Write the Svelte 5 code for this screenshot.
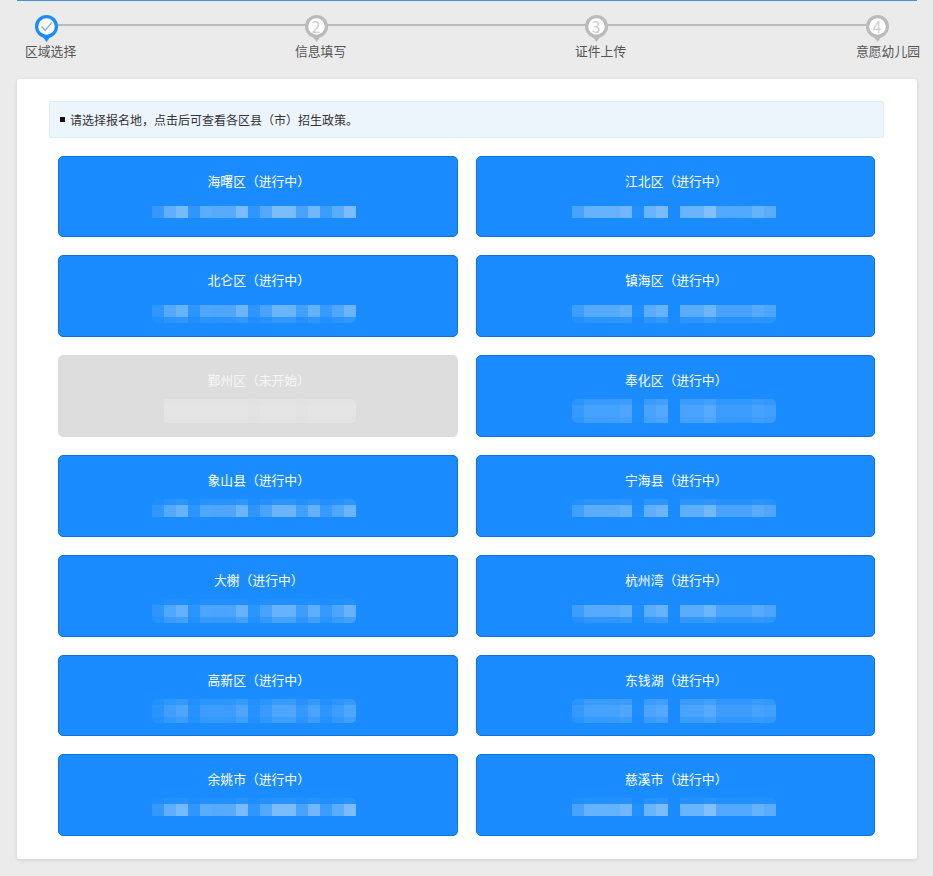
<script>
  const steps = [
    { label: "区域选择", active: true },
    { label: "信息填写", num: 2 },
    { label: "证件上传", num: 3 },
    { label: "意愿幼儿园", num: 4 }
  ];

  // blurred-out line under each title: one row of 17 cells, same shape per column
  const leftCells = [0.12, 0.3, 0.4, 0.1, 0.28, 0.27, 0.27, 0.42, 0.1, 0.25, 0.42, 0.42, 0.2, 0.38, 0.15, 0.28, 0.42];
  const rightCells = [0.2, 0.33, 0.33, 0.33, 0.38, 0.03, 0.35, 0.42, 0, 0.35, 0.35, 0.45, 0.25, 0.25, 0.25, 0.33, 0.28];
  const flatCells = [0, 0.25, 0.25, 0.25, 0.25, 0.25, 0.25, 0.25, 0.2, 0.25, 0.25, 0.25, 0.2, 0.25, 0.25, 0.25, 0.25];

  // blur: [row above, main row, row below] strength
  const areas = [
    { name: "海曙区", blur: [0, 1, 0] },
    { name: "江北区", blur: [0, 1, 0] },
    { name: "北仑区", blur: [0, 0.85, 0.25] },
    { name: "镇海区", blur: [0, 0.8, 0.25] },
    { name: "鄞州区", status: "未开始", blur: [0.8, 1, 0.8] },
    { name: "奉化区", blur: [0.4, 0.6, 0.5] },
    { name: "象山县", blur: [0.2, 0.85, 0] },
    { name: "宁海县", blur: [0.2, 0.85, 0] },
    { name: "大榭", blur: [0.1, 0.8, 0.45] },
    { name: "杭州湾", blur: [0, 0.8, 0.3] },
    { name: "高新区", blur: [0.3, 0.55, 0.4] },
    { name: "东钱湖", blur: [0.4, 0.6, 0.4] },
    { name: "余姚市", blur: [0.15, 1, 0] },
    { name: "慈溪市", blur: [0.15, 1, 0] }
  ];

  function cellsFor(i, area) {
    if (area.status) return flatCells;
    return i % 2 === 0 ? leftCells : rightCells;
  }
</script>

<div class="page">
  <div class="steps">
    {#each steps as step}
      <div class="step" class:active={step.active}>
        <div class="pin">
          <svg width="23" height="27" viewBox="0 0 23 27">
            <path class="tail" d="M6.5 20 L11.5 27 L16.5 20 Z" />
            <circle class="ring" cx="11.5" cy="11.5" r="9.9" />
            {#if step.active}
              <path class="tick" d="M6.5 11.5 L10.2 15.4 L16.6 7.6" />
            {/if}
          </svg>
          {#if step.num}
            <span class="num">{step.num}</span>
          {/if}
        </div>
        <div class="label">{step.label}</div>
      </div>
    {/each}
  </div>

  <div class="card">
    <div class="notice">请选择报名地，点击后可查看各区县（市）招生政策。</div>
    <div class="areas">
      {#each areas as area, i}
        <button class="area" class:off={area.status}>
          <span class="title">{area.name}（{area.status || "进行中"}）</span>
          <span class="blur">
            {#each area.blur as strength}
              <span class="blur-row">
                {#each cellsFor(i, area) as a}
                  <i style="opacity: {a * strength}"></i>
                {/each}
              </span>
            {/each}
          </span>
        </button>
      {/each}
    </div>
  </div>
</div>

<style>
  :global(body) {
    background: #ebebeb;
    font-family: "Noto Sans CJK SC", "Liberation Sans", sans-serif;
  }
  .page {
    width: 900px;
    margin-left: 17px;
    padding-bottom: 17px;
    border-top: 1px solid #4a90d9;
  }

  .steps {
    position: relative;
    display: grid;
    grid-template-columns: 270px 280px 281px auto;
    padding: 14px 0 19px 8px;
  }
  .steps::before {
    content: "";
    position: absolute;
    top: 23px;
    left: 29px;
    right: 40px;
    height: 2px;
    background: #bbb;
  }
  .step {
    position: relative;
  }
  .pin {
    position: relative;
    width: 23px;
    height: 27px;
    margin-left: 9.5px;
  }
  .pin svg {
    display: block;
  }
  .tail {
    fill: #bbb;
  }
  .ring {
    fill: #fff;
    stroke: #bbb;
    stroke-width: 3.2;
  }
  .active .tail {
    fill: #1a8cff;
  }
  .active .ring {
    stroke: #1a8cff;
  }
  .tick {
    fill: none;
    stroke: #7ba6d8;
    stroke-width: 1.2;
  }
  .num {
    position: absolute;
    top: 0;
    left: 0;
    width: 23px;
    height: 23px;
    line-height: 23px;
    text-align: center;
    font-size: 16px;
    color: #cfcfcf;
  }
  .label {
    font-size: 12.8px;
    line-height: 18px;
    color: #555;
    white-space: nowrap;
  }

  .card {
    background: #fff;
    border-radius: 3px;
    box-shadow: 0 1px 4px rgba(0, 0, 0, 0.12);
    padding: 22px 33px 23px 32px;
  }
  .notice {
    height: 37px;
    box-sizing: border-box;
    display: flex;
    align-items: center;
    gap: 5px;
    padding-left: 10px;
    margin-bottom: 17.6px;
    background: #ecf4fc;
    border: 1px solid #e3ebf3;
    border-radius: 2px;
    font-size: 12px;
    color: #333;
  }
  .notice::before {
    content: "";
    width: 5px;
    height: 5px;
    background: #111;
  }
  .areas {
    display: grid;
    grid-template-columns: 1fr 1fr;
    grid-auto-rows: 81.8px;
    gap: 18px;
    padding: 0 9px;
  }
  .area {
    display: flex;
    flex-direction: column;
    align-items: center;
    box-sizing: border-box;
    margin: 0;
    padding: 13px 0 0 2px;
    background: #1a8cff;
    border: 1px solid #0f74d6;
    border-radius: 5px;
    color: #fff;
    font-family: inherit;
    font-size: 12.8px;
  }
  .area.off {
    background: #ddd;
    border-color: #ddd;
    color: rgba(255, 255, 255, 0.75);
  }
  .title {
    line-height: 21px;
    height: 21px;
  }
  .blur {
    display: flex;
    flex-direction: column;
    width: 204px;
    margin: 9px 0 0 -4px;
    border-radius: 5px;
    overflow: hidden;
  }
  .area:nth-child(odd) .blur {
    margin-left: -10px;
  }
  .blur-row {
    display: flex;
    height: 6px;
  }
  .blur-row:nth-child(2) {
    height: 12px;
  }
  .blur-row i {
    width: 12px;
    background: #fff;
  }
</style>
